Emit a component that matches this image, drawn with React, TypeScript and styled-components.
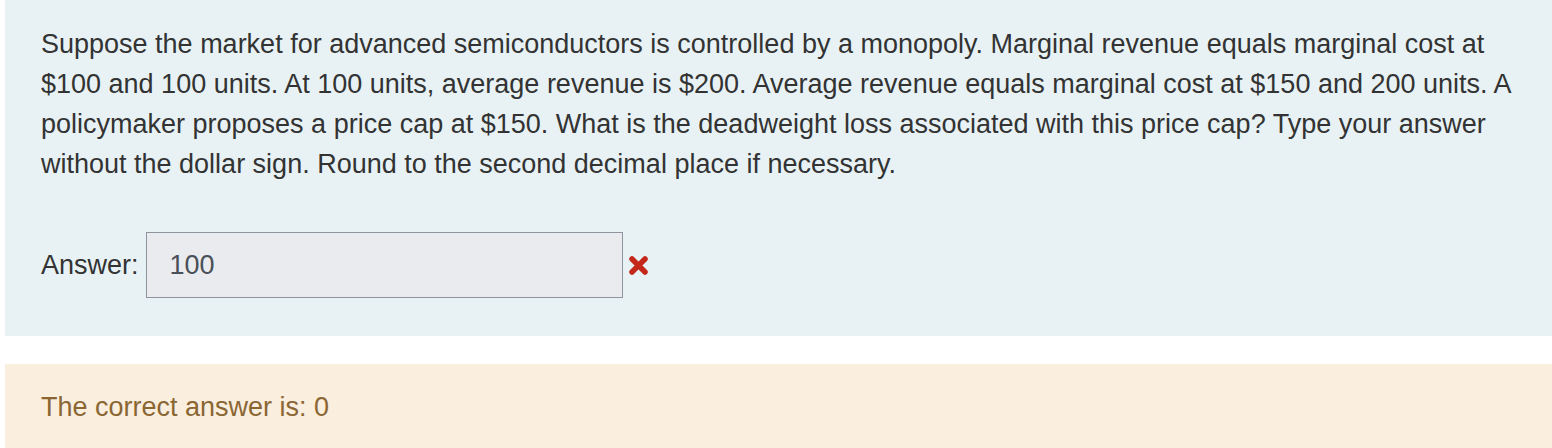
import React from 'react'
import styled, { createGlobalStyle } from 'styled-components'

const Global = createGlobalStyle`
    html, body {
        margin: 0;
        padding: 0;
        background: #fff;
    }
    body {
        font-family: "Liberation Sans", Arial, Helvetica, sans-serif;
        color: #333;
    }
`

const Page = styled.div`
    padding: 0 0 0 5px;
    display: flex;
    flex-direction: column;
    gap: 28px;
`

const Formulation = styled.div`
    background: #e8f2f5;
    padding: 24px 36px 38px 36px;
`

const QuestionText = styled.p`
    margin: 0 0 48px 0;
    font-size: 27px;
    line-height: 40px;
    color: #333;
`

const AnswerRow = styled.div`
    display: flex;
    align-items: center;
    gap: 7px;
`

const Label = styled.label`
    font-size: 27px;
    line-height: 40px;
    color: #333;
`

const AnswerInput = styled.input`
    box-sizing: border-box;
    width: 477px;
    height: 66px;
    padding: 0 23px;
    border: 1px solid #8f959e;
    border-radius: 0;
    background: #e9ebef;
    font-family: inherit;
    font-size: 27px;
    color: #495057;
    outline: none;
`

const WrongIcon = styled.svg`
    width: 21px;
    height: 21px;
    margin-left: -2px;
`

const Outcome = styled.div`
    background: #faeedf;
    padding: 23px 36px 24px 36px;
    min-height: 90px;
    box-sizing: border-box;
`

const RightAnswer = styled.div`
    font-size: 27px;
    line-height: 40px;
    color: #8a6633;
`

const App = () => {
    return (
        <>
            <Global />
            <Page>
                <Formulation>
                    <QuestionText>
                        Suppose the market for advanced semiconductors is controlled by a monopoly. Marginal revenue equals marginal cost at $100 and 100 units. At 100 units, average revenue is $200. Average revenue equals marginal cost at $150 and 200 units. A policymaker proposes a price cap at $150. What is the deadweight loss associated with this price cap? Type your answer without the dollar sign. Round to the second decimal place if necessary.
                    </QuestionText>
                    <AnswerRow>
                        <Label htmlFor="answer">Answer:</Label>
                        <AnswerInput id="answer" readOnly value="100" />
                        <WrongIcon viewBox="0 0 21 21" aria-label="Incorrect">
                            <path d="M4 4 L17 17 M17 4 L4 17" stroke="#c4281b" strokeWidth="5.5" strokeLinecap="round" />
                        </WrongIcon>
                    </AnswerRow>
                </Formulation>
                <Outcome>
                    <RightAnswer>The correct answer is: 0</RightAnswer>
                </Outcome>
            </Page>
        </>
    )
}

export default App
